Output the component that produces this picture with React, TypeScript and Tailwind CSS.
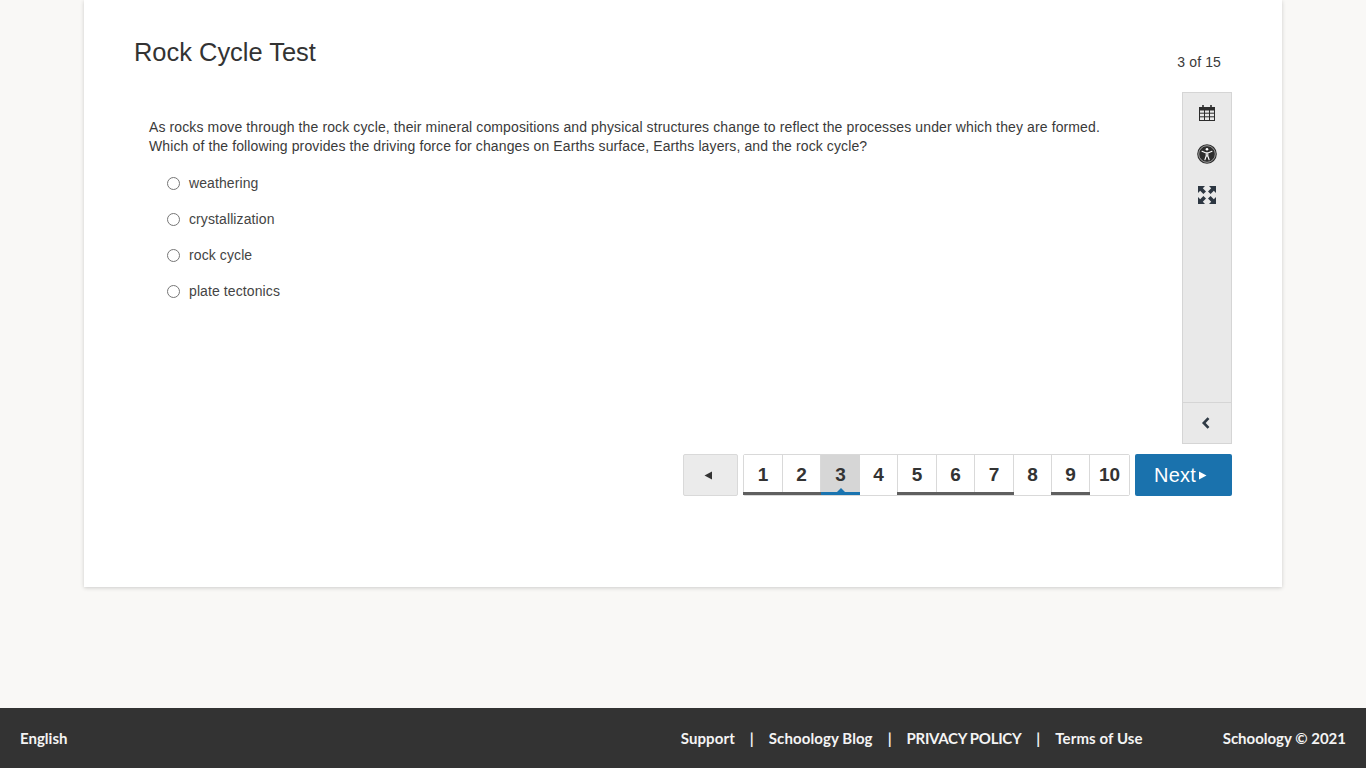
import React from "react";

const options = ["weathering", "crystallization", "rock cycle", "plate tectonics"];
const pages = [
  { n: 1, done: true, w: "w-[39px]" },
  { n: 2, done: true, w: "w-[38px]" },
  { n: 3, current: true, w: "w-[39px]" },
  { n: 4, w: "w-[38px]" },
  { n: 5, done: true, w: "w-[39px]" },
  { n: 6, done: true, w: "w-[38px]" },
  { n: 7, done: true, w: "w-[39px]" },
  { n: 8, w: "w-[38px]" },
  { n: 9, done: true, w: "w-[38px]" },
  { n: 10, w: "w-[39px]" },
];

function CalendarIcon() {
  return (
    <svg width="18" height="18" viewBox="0 0 18 18" fill="none" stroke="#2d2d2d" strokeWidth="1">
      <path d="M1 3h16v3.5H1z" fill="#2d2d2d" stroke="none" />
      <path d="M5 1v2.5M13 1v2.5" strokeWidth="1.6" />
      <rect x="1.5" y="5.5" width="15" height="11" />
      <path d="M1.5 9.2h15M1.5 12.8h15M6.5 5.5v11M11.5 5.5v11" />
    </svg>
  );
}

function AccessIcon() {
  return (
    <svg width="20" height="20" viewBox="0 0 20 20">
      <circle cx="10" cy="10" r="9.8" fill="#2d2d2d" />
      <circle cx="10" cy="10" r="8.3" fill="none" stroke="#e9e9e9" strokeWidth="0.6" />
      <circle cx="10" cy="5.2" r="1.3" fill="#fff" />
      <path
        d="M5 7.2l3.5 1.5 1.5.2 1.5-.2L15 7.2M9.2 8.8v3.2L7.9 15.8M10.8 8.8v3.2l1.3 3.8M9.2 9h1.6v3H9.2z"
        fill="none"
        stroke="#fff"
        strokeWidth="1.1"
        strokeLinecap="round"
        strokeLinejoin="round"
      />
    </svg>
  );
}

function ExpandIcon() {
  return (
    <svg width="18" height="18" viewBox="0 0 18 18" fill="#2d3742">
      <path d="M0 0h7L4.8 2.2 8 5.4 5.4 8 2.2 4.8 0 7z" />
      <path d="M18 0v7l-2.2-2.2L12.6 8 10 5.4l3.2-3.2L11 0z" />
      <path d="M0 18v-7l2.2 2.2L5.4 10 8 12.6l-3.2 3.2L7 18z" />
      <path d="M18 18h-7l2.2-2.2L10 12.6l2.6-2.6 3.2 3.2L18 11z" />
    </svg>
  );
}

export default function App() {
  return (
    <div className="flex min-h-[768px] flex-col bg-[#f9f8f6] font-['Liberation_Sans',Arial,sans-serif] text-[#333]">
      <main className="mx-auto h-[587px] w-[1198px] bg-white px-[50px] shadow-[0_1px_4px_rgba(0,0,0,0.18)]">
        <div className="flex h-[92px] items-start justify-between">
          <h1 className="mt-[37px] text-[25.45px] leading-[30px] text-[#333]">Rock Cycle Test</h1>
          <div className="mr-[11px] mt-[54px] text-[14px] leading-4 tracking-[0.12px] text-[#3a3a3a]">3 of 15</div>
        </div>

        <div className="flex h-[352px]">
          <div className="flex-1 pl-[15px] pt-[26px]">
            <p className="text-[14px] leading-[19px] tracking-[0.115px] text-[#3a3a3a]">
              As rocks move through the rock cycle, their mineral compositions and physical structures change to reflect the processes under which they are formed.
              <br />
              Which of the following provides the driving force for changes on Earths surface, Earths layers, and the rock cycle?
            </p>
            <div className="mt-[9px] flex flex-col pl-[18px]">
              {options.map((o) => (
                <label key={o} className="flex h-9 items-center text-[14px] tracking-[0.1px]">
                  <span className="h-[13px] w-[13px] rounded-full border border-[#767676] bg-white" />
                  <span className="ml-[9px] text-[#444]">{o}</span>
                </label>
              ))}
            </div>
          </div>

          <aside className="flex w-[50px] flex-col border border-[#d5d5d5] bg-[#e9e9e9]">
            <div className="flex flex-1 flex-col items-center gap-[22px] pt-[11px]">
              <CalendarIcon />
              <AccessIcon />
              <ExpandIcon />
            </div>
            <div className="flex h-[41px] items-center justify-center border-t border-[#d5d5d5]">
              <svg width="10" height="12" viewBox="0 0 10 12" fill="none" stroke="#2f3a45" strokeWidth="2.6" className="mr-[2px]">
                <path d="M7.5 1.2L2.8 6l4.7 4.8" />
              </svg>
            </div>
          </aside>
        </div>

        <nav className="mt-[10px] flex h-[42px] justify-end gap-[5px]">
          <button className="flex h-[42px] w-[55px] items-center justify-center rounded-[2px] border border-[#d9d9d9] bg-[#ebebeb] text-[#333]">
            <svg width="9" height="9" viewBox="0 0 9 9" fill="#333" className="mr-[4px]">
              <path d="M8 .5v8L.5 4.5z" />
            </svg>
          </button>
          <div className="flex h-[42px] w-[387px] rounded-[2px] border border-[#d9d9d9] bg-white">
            {pages.map((p) => (
              <div
                key={p.n}
                className={`relative flex items-center justify-center border-r border-[#d9d9d9] text-[19px] font-bold last:border-r-0 ${p.w} ${p.current ? "border-r-0 bg-[#d6d6d6]" : "bg-white"}`}
              >
                {p.n}
                {p.done && <span className="absolute -left-px -right-px bottom-0 h-[3px] bg-[#5f5f5f]" />}
                {p.current && (
                  <>
                    <span className="absolute -right-px bottom-0 left-0 h-[3px] bg-[#1a74b0]" />
                    <span className="absolute bottom-[3px] left-1/2 h-0 w-0 -translate-x-1/2 border-x-[4px] border-b-[4px] border-x-transparent border-b-[#1a74b0]" />
                  </>
                )}
              </div>
            ))}
          </div>
          <button className="flex h-[42px] w-[97px] items-center justify-start gap-[2px] rounded-[2px] bg-[#1a72ad] pl-[19px] text-[20px] tracking-[0.2px] text-white">
            Next
            <svg width="9" height="9" viewBox="0 0 9 9" fill="#fff">
              <path d="M1 .5v8L8.5 4.5z" />
            </svg>
          </button>
        </nav>
      </main>

      <div className="h-[121px]" />

      <footer className="flex h-[60px] items-center justify-between bg-[#333] px-5 font-['Lato',sans-serif] text-[15px] font-bold text-[#f4f4f4]">
        <span>English</span>
        <div className="ml-auto mr-[80px] flex items-center gap-[15px]">
          <span className="tracking-[0.1px]">Support</span>
          <span>|</span>
          <span className="tracking-[0.1px]">Schoology Blog</span>
          <span>|</span>
          <span className="tracking-[-0.3px]">PRIVACY POLICY</span>
          <span>|</span>
          <span className="tracking-[0.1px]">Terms of Use</span>
        </div>
        <span>Schoology © 2021</span>
      </footer>
    </div>
  );
}
